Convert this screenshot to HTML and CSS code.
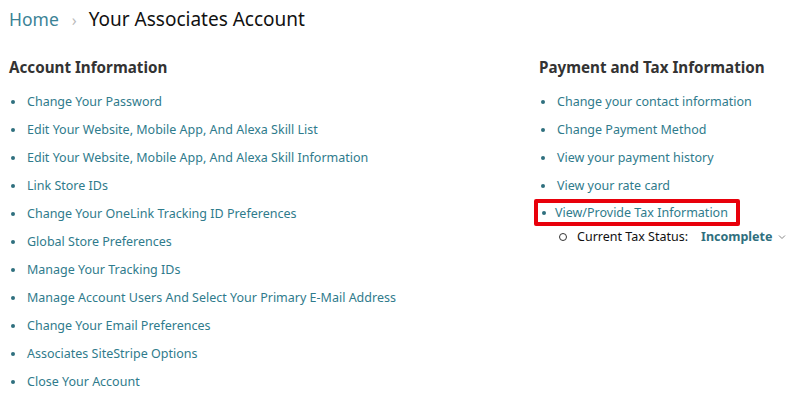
FILE: index.html
```html
<!DOCTYPE html>
<html lang="en">
<head>
    <meta charset="UTF-8">
    <meta name="viewport" content="width=device-width, initial-scale=1.0">
    <title>Your Associates Account</title>
    <link rel="stylesheet" href="styles.css">
</head>
<body>
    <div class="breadcrumb">
        <a href="#" class="crumb-home">Home</a>
        <span class="crumb-sep">&rsaquo;</span>
        <span class="crumb-current">Your Associates Account</span>
    </div>
    <div class="columns">
        <div class="col col-left">
            <h3>Account Information</h3>
            <ul class="links">
                <li><a href="#">Change Your Password</a></li>
                <li><a href="#">Edit Your Website, Mobile App, And Alexa Skill List</a></li>
                <li><a href="#">Edit Your Website, Mobile App, And Alexa Skill Information</a></li>
                <li><a href="#">Link Store IDs</a></li>
                <li><a href="#">Change Your OneLink Tracking ID Preferences</a></li>
                <li><a href="#">Global Store Preferences</a></li>
                <li><a href="#">Manage Your Tracking IDs</a></li>
                <li><a href="#">Manage Account Users And Select Your Primary E-Mail Address</a></li>
                <li><a href="#">Change Your Email Preferences</a></li>
                <li><a href="#">Associates SiteStripe Options</a></li>
                <li><a href="#">Close Your Account</a></li>
            </ul>
        </div>
        <div class="col col-right">
            <h3>Payment and Tax Information</h3>
            <ul class="links">
                <li><a href="#">Change your contact information</a></li>
                <li><a href="#">Change Payment Method</a></li>
                <li><a href="#">View your payment history</a></li>
                <li><a href="#">View your rate card</a></li>
                <li class="highlight"><a href="#">View/Provide Tax Information</a></li>
            </ul>
            <ul class="sub">
                <li>
                    <span class="status-label">Current Tax Status:</span>
                    <span class="status-value">Incomplete</span>
                    <svg class="chevron" width="8" height="6" viewBox="0 0 8 6"><path d="M1 1.5 L4 4.5 L7 1.5" fill="none" stroke="#888" stroke-width="1"/></svg>
                </li>
            </ul>
        </div>
    </div>
</body>
</html>
```

FILE: styles.css
```css
* {
    margin: 0;
    padding: 0;
    box-sizing: border-box;
}

body {
    font-family: "Noto Sans", "DejaVu Sans", sans-serif;
    background-color: white;
    color: #111;
    padding: 6px 9px 0 9px;
}

a {
    color: #2f7b8c;
    text-decoration: none;
}

.breadcrumb {
    display: flex;
    align-items: baseline;
    height: 28px;
    white-space: nowrap;
}

.crumb-home {
    color: #3b8396;
    font-size: 17.5px;
}

.crumb-sep {
    color: #bbb;
    font-size: 16px;
    margin: 0 12px 0 13px;
}

.crumb-current {
    color: #111;
    font-size: 19px;
}

.columns {
    display: flex;
    margin-top: 22px;
}

.col-left {
    width: 530px;
}

.col-right {
    flex: 1;
}

h3 {
    font-size: 15.2px;
    font-weight: bold;
    color: #333;
    line-height: 22px;
    margin-bottom: 9px;
}

.links {
    list-style: none;
}

.links li {
    font-size: 12.5px;
    line-height: 18px;
    height: 28px;
    padding-top: 2px;
    display: flex;
    align-items: center;
    white-space: nowrap;
}

.links li::before {
    content: "";
    width: 4px;
    height: 4px;
    border-radius: 50%;
    background: #2f6f7e;
    margin: 0 12px 0 2px;
    flex-shrink: 0;
}

.links li.highlight {
    border: 4px solid #e8000b;
    border-radius: 2px;
    width: 206px;
    height: 27px;
    margin: 0 0 1px -5px;
    padding: 0 0 0 2px;
}

.links li.highlight::before {
    margin-right: 9px;
}

.sub {
    list-style: none;
    margin-left: 20px;
    margin-top: 2px;
}

.sub li {
    display: flex;
    align-items: center;
    font-size: 12.5px;
    line-height: 18px;
    white-space: nowrap;
}

.sub li::before {
    content: "";
    width: 6px;
    height: 6px;
    border: 1px solid #333;
    border-radius: 50%;
    margin-right: 10px;
}

.status-label {
    color: #111;
}

.status-value {
    color: #2f6f7e;
    font-weight: bold;
    margin-left: 13px;
}

.chevron {
    margin-left: 6px;
}
```
